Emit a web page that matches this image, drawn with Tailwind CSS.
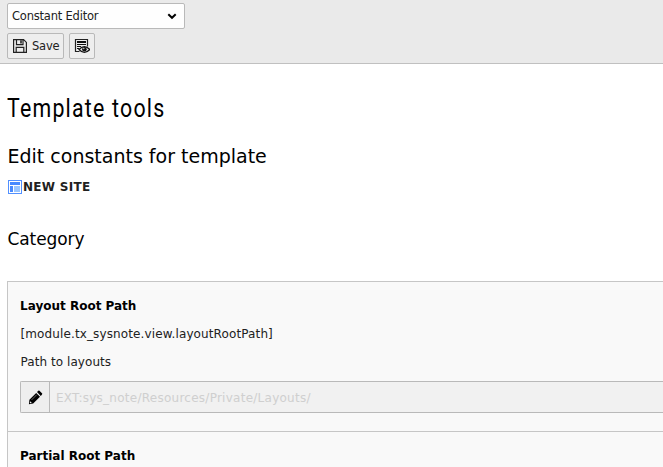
<!DOCTYPE html>
<html lang="en">
<head>
<meta charset="utf-8">
<title>Template tools</title>
<script src="https://cdn.jsdelivr.net/npm/@tailwindcss/browser@4"></script>
</head>
<body class="h-[467px] w-[663px] overflow-hidden bg-white font-['Verdana','DejaVu_Sans',sans-serif] text-[12px] text-[#212121]">
<header class="flex h-16 flex-col gap-1 border-b border-[#c0c0c0] bg-[#eaeaea] pt-[3px] pl-[7px]">
  <button class="flex h-[26px] w-[178px] items-center justify-between rounded-[2px] border border-[#b9b9b9] bg-[#fefefe] pr-[6px] pl-1">
    <span class="pt-[2px] text-[11.5px] tracking-[-0.2px]">Constant Editor</span>
    <svg class="h-3 w-3" viewBox="0 0 12 12" fill="none" stroke="#000" stroke-width="2"><path d="M2.3 4.2 6 7.8 9.7 4.2"/></svg>
  </button>
  <div class="flex gap-[5px]">
    <button class="flex h-[26px] w-[57px] items-center rounded-[2px] border border-[#b9b9b9] bg-[#eee] pl-[5px]">
      <svg class="mr-[5px] h-[14px] w-[14px] shrink-0" viewBox="0 0 14 14" fill="none" stroke="#222" stroke-width="1.2"><path d="M.6.6h10l2.8 2.8v10H.6zM3.5.6v5h6.5v-5M3.2 13.4V8.3h7.6v5.1"/><path d="M7.2 1.2h1.6v3.2H7.2z" fill="#222" stroke="none"/></svg>
      <span class="pt-[2px] text-[11.5px] tracking-[-0.2px]">Save</span>
    </button>
    <button class="flex h-[26px] w-[26px] items-center justify-center rounded-[2px] border border-[#b9b9b9] bg-[#eee]" aria-label="View">
      <svg class="h-4 w-4" viewBox="0 0 16 16" fill="none"><path d="M1.5 14V1.5h12v7M1 13.5h4.5" stroke="#222" stroke-width="1.2"/><path d="M3 3h9v2H3z" fill="#111"/><path d="M3 6.5h9M3 8.5h4M3 10.5h2" stroke="#111" stroke-width="1.1"/><path d="M5 11.5Q10.4 5.7 15.8 11.5 10.4 17.2 5 11.5Z" fill="#eee" stroke="#111" stroke-width="1.2"/><circle cx="10.4" cy="11.2" r="2.3" fill="#111"/><circle cx="9.8" cy="10.5" r=".7" fill="#ccc"/></svg>
    </button>
  </div>
</header>
<main class="flex h-[403px] flex-col pl-[7px]">
  <h1 class="mt-7 h-8 shrink-0 origin-left scale-x-[0.82] font-['Roboto',sans-serif] text-[26px] leading-8 tracking-[1.5px] whitespace-nowrap text-black">Template tools</h1>
  <h2 class="mt-5 h-6 shrink-0 pl-[0.5px] text-[19px] leading-6 whitespace-nowrap text-black">Edit constants for template</h2>
  <div class="mt-[9px] flex h-5 shrink-0 items-center">
    <svg class="ml-[1px] h-[14px] w-[14px] shrink-0" viewBox="0 0 14 14"><path fill="#5290ff" d="M0 0h14v14H0z"/><path fill="#fff" d="M1 1h12v12H1z"/><path fill="#488aff" d="M2 2h10v3H2zM2 6h3v6H2z"/><path fill="#9bc6ff" d="M6 6h6v6H6z"/></svg>
    <strong class="ml-[1px] text-[12px] tracking-[0.3px]">NEW SITE</strong>
  </div>
  <h3 class="mt-[30px] h-6 shrink-0 pl-[0.5px] text-[17px] leading-6 tracking-[-0.1px] text-black">Category</h3>
  <section class="mt-[30px] flex min-h-0 flex-1 flex-col border-t border-l border-[#c6c6c6] bg-[#f9f9f9]">
    <div class="h-[150px] shrink-0 border-b border-[#c6c6c6] pl-3">
      <h4 class="pt-[14px] text-[12px] leading-5 font-bold text-black">Layout Root Path</h4>
      <p class="mt-2 pl-[0.5px] text-[12px] leading-5 tracking-[0.12px] whitespace-nowrap">[module.tx_sysnote.view.layoutRootPath]</p>
      <p class="mt-2 pl-[0.5px] text-[12px] leading-5 tracking-[0.06px]">Path to layouts</p>
      <div class="mt-[9px] flex h-8 rounded-l-[2px] border border-r-0 border-[#b9b9b9] bg-[#f1f1f1]">
        <span class="flex w-[29px] shrink-0 items-center justify-center border-r border-[#b9b9b9] bg-[#eee]">
          <svg class="h-[15px] w-[15px]" viewBox="0 0 15 15"><path d="M1.4 9.7 8.2 2.9l3.8 3.8-6.8 6.8-4.3.8zM9 2.1l1.3-1.3q.6-.6 1.2 0l2.5 2.5q.6.6 0 1.2L12.8 5.9z"/><path d="M3.6 9.9 8.8 4.7" stroke="#aaa" stroke-width=".6"/><path d="m2.1 11.2 1.8 1.7-1.7.3-.4-.4z" fill="#eee"/></svg>
        </span>
        <span class="pl-[6px] text-[12px] leading-[32px] tracking-[0.26px] text-[#cfcfcf]">EXT:sys_note/Resources/Private/Layouts/</span>
      </div>
    </div>
    <div class="min-h-0 flex-1 pl-3"><h4 class="pt-[14px] text-[12px] leading-5 font-bold text-black">Partial Root Path</h4></div>
  </section>
</main>
</body>
</html>
